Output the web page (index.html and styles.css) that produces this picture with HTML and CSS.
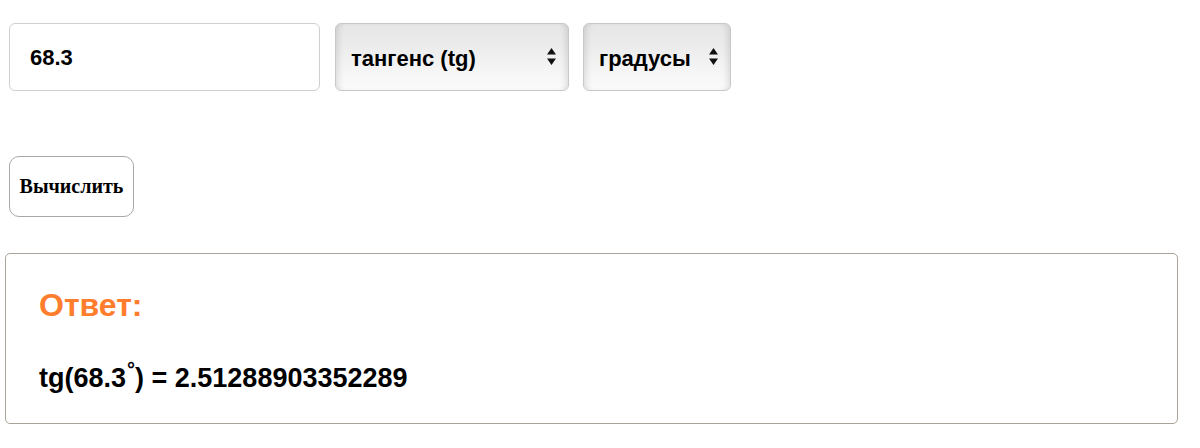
FILE: index.html
```html
<!DOCTYPE html>
<html lang="ru">
<head>
<meta charset="utf-8">
<title>Тангенс</title>
<link rel="stylesheet" href="styles.css">
</head>
<body>
<div class="page">
  <div class="row">
    <input class="num" type="text" value="68.3">
    <div class="sel sel-func">
      <select><option>тангенс (tg)</option></select>
      <svg class="arrows" width="9" height="17" viewBox="0 0 9 17"><path d="M4.5 0 L9 6.5 L0 6.5 Z M0 10.5 L9 10.5 L4.5 17 Z" fill="#111"/></svg>
    </div>
    <div class="sel sel-unit">
      <select><option>градусы</option></select>
      <svg class="arrows" width="9" height="17" viewBox="0 0 9 17"><path d="M4.5 0 L9 6.5 L0 6.5 Z M0 10.5 L9 10.5 L4.5 17 Z" fill="#111"/></svg>
    </div>
  </div>
  <button class="calc" type="button">Вычислить</button>
  <div class="answer">
    <div class="title">Ответ:</div>
    <div class="result">tg(68.3<sup>°</sup>) = 2.51288903352289</div>
  </div>
</div>
</body>
</html>
```

FILE: styles.css
```css
html, body {
  margin: 0;
  padding: 0;
  background: #fff;
}
.page {
  padding: 23px 22px 0 5px;
  font-family: "Liberation Sans", Arial, sans-serif;
  color: #000;
}
.row {
  display: flex;
  gap: 15px;
  margin-left: 4px;
  height: 68px;
}
.num {
  box-sizing: border-box;
  width: 311px;
  height: 68px;
  border: 1px solid #cfcfcf;
  border-radius: 6px;
  padding: 2px 0 0 20px;
  font-family: "Liberation Sans", Arial, sans-serif;
  font-weight: bold;
  font-size: 22px;
  color: #000;
  outline: none;
}
.sel {
  position: relative;
  height: 68px;
}
.sel-func { width: 234px; }
.sel-unit { width: 148px; margin-left: -1px; }
.sel select {
  appearance: none;
  -webkit-appearance: none;
  box-sizing: border-box;
  width: 100%;
  height: 100%;
  border: 1px solid #c8c8c8;
  border-radius: 6px;
  padding: 2px 30px 0 15px;
  font-family: "Liberation Sans", Arial, sans-serif;
  font-weight: bold;
  font-size: 22px;
  color: #000;
  background: linear-gradient(to bottom, #e6e6e6 0%, #ececec 35%, #f6f6f6 75%, #fbfbfb 100%);
  box-shadow: inset 6px 0 6px -4px rgba(0,0,0,0.12), inset -6px 0 6px -4px rgba(0,0,0,0.12);
  outline: none;
}
.arrows {
  position: absolute;
  top: 25px;
  right: 13px;
  pointer-events: none;
}
.calc {
  display: block;
  margin: 65px 0 0 4px;
  box-sizing: border-box;
  width: 125px;
  height: 61px;
  border: 1px solid #a8a8a8;
  border-radius: 10px;
  background: #fff;
  font-family: "Liberation Serif", "Times New Roman", serif;
  font-weight: bold;
  font-size: 20px;
  color: #000;
  padding: 0;
}
.answer {
  box-sizing: border-box;
  margin-top: 36px;
  height: 171px;
  border: 1px solid #aaa39b;
  border-radius: 5px;
  padding: 33px 0 0 33px;
}
.title {
  font-weight: bold;
  font-size: 32px;
  color: #ff7d2c;
  line-height: 36px;
}
.result {
  margin-top: 40px;
  font-weight: bold;
  font-size: 27px;
  line-height: 30px;
}
.result sup {
  font-size: 20px;
  font-weight: bold;
  vertical-align: top;
  position: relative;
  top: -9px;
  margin-left: 1px;
}
```
